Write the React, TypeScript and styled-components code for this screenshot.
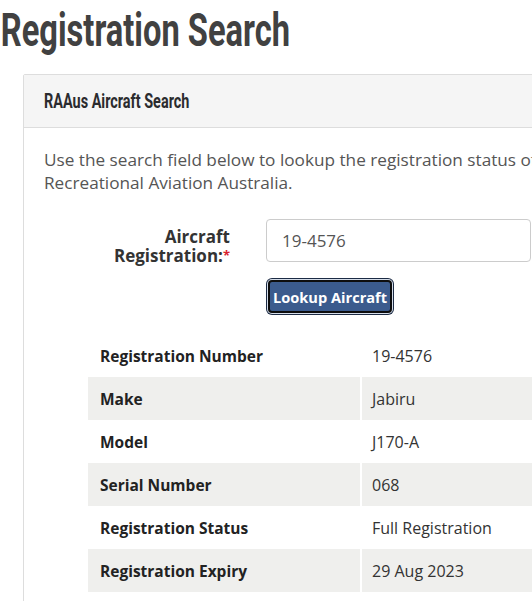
import React from 'react';
import styled, { createGlobalStyle } from 'styled-components';

const GlobalStyle = createGlobalStyle`
  html, body {
    margin: 0;
    padding: 0;
    background: #fff;
    overflow: hidden;
  }
  body {
    font-family: 'Open Sans', 'Lato', Arial, sans-serif;
    color: #555;
  }
`;

const Page = styled.div`
  width: 760px;
`;

// condensed display face: Roboto squeezed to the width of the original
const Heading = styled.h1`
  margin: 0;
  padding: 4px 0 0 1px;
  font-family: Roboto, 'Liberation Sans', sans-serif;
  font-weight: 700;
  font-size: 46px;
  line-height: 52px;
  color: #414141;
  transform: scaleX(0.71);
  transform-origin: left center;
  white-space: nowrap;
`;

const Panel = styled.section`
  margin: 18px 0 0 23px;
  border: 1px solid #dddddd;
  border-radius: 2px;
  background: #fff;
`;

const PanelHeader = styled.div`
  height: 52px;
  display: flex;
  align-items: center;
  padding: 0 20px;
  background: #f5f5f5;
  border-bottom: 1px solid #dddddd;
`;

const PanelTitle = styled.h2`
  margin: 0;
  font-family: Roboto, 'Liberation Sans', sans-serif;
  font-weight: 700;
  font-size: 19.5px;
  color: #2b2b2e;
  transform: scaleX(0.74);
  transform-origin: left center;
  white-space: nowrap;
`;

const PanelBody = styled.div`
  padding: 20px 20px 20px;
`;

const Intro = styled.p`
  margin: 0;
  font-size: 17.2px;
  line-height: 23px;
  color: #555;
  white-space: nowrap;
`;

const FormRow = styled.div`
  display: grid;
  grid-template-columns: 186px 265px;
  column-gap: 36px;
  margin-top: 25px;
  align-items: start;
`;

const Label = styled.label`
  padding-top: 8px;
  text-align: right;
  font-weight: 700;
  font-size: 17px;
  line-height: 19px;
  color: #333;
`;

const Required = styled.span`
  color: #d9232e;
  font-size: 13px;
  vertical-align: top;
`;

const Input = styled.input`
  box-sizing: border-box;
  width: 265px;
  height: 43px;
  padding: 0 15px;
  border: 1px solid #cccccc;
  border-radius: 4px;
  font-family: 'Open Sans', 'Lato', Arial, sans-serif;
  font-size: 17px;
  color: #555;
  outline: none;
`;

const ButtonRow = styled.div`
  display: grid;
  grid-template-columns: 186px auto;
  column-gap: 36px;
  margin-top: 15px;
  justify-items: start;
`;

const Button = styled.button`
  grid-column: 2;
  margin-left: 2px;
  height: 33px;
  padding: 0 3px;
  background: #3b5b8d;
  color: #fff;
  border: 2px solid #0d0d0d;
  border-radius: 4px;
  box-shadow: 0 0 0 1px #d6deea, 0 0 0 2px #1c2b44;
  font-family: 'Open Sans', 'Lato', Arial, sans-serif;
  font-weight: 700;
  font-size: 14.6px;
  cursor: pointer;
`;

const Table = styled.table`
  margin: 21px 0 0 44px;
  width: 640px;
  border-collapse: collapse;
`;

const Row = styled.tr<{ $shaded: boolean }>`
  height: 43px;
  background: ${(p) => (p.$shaded ? '#efefed' : '#fff')};
`;

const Key = styled.th`
  width: 248px;
  padding: 0 12px;
  text-align: left;
  font-weight: 700;
  font-size: 15.5px;
  color: #222;
  border-right: 2px solid #fff;
`;

const Value = styled.td`
  padding: 0 10px;
  font-size: 16px;
  color: #333;
`;

const DETAILS: [string, string][] = [
  ['Registration Number', '19-4576'],
  ['Make', 'Jabiru'],
  ['Model', 'J170-A'],
  ['Serial Number', '068'],
  ['Registration Status', 'Full Registration'],
  ['Registration Expiry', '29 Aug 2023'],
];

export default function App() {
  return (
    <Page>
      <GlobalStyle />
      <Heading>Registration Search</Heading>
      <Panel>
        <PanelHeader>
          <PanelTitle>RAAus Aircraft Search</PanelTitle>
        </PanelHeader>
        <PanelBody>
          <Intro>
            Use the search field below to lookup the registration status of an aircraft registered with
            <br />
            Recreational Aviation Australia.
          </Intro>
          <FormRow>
            <Label htmlFor="rego">
              Aircraft
              <br />
              Registration:<Required>*</Required>
            </Label>
            <Input id="rego" defaultValue="19-4576" />
          </FormRow>
          <ButtonRow>
            <Button>Lookup Aircraft</Button>
          </ButtonRow>
          <Table>
            <tbody>
              {DETAILS.map(([k, v], i) => (
                <Row key={k} $shaded={i % 2 === 1}>
                  <Key>{k}</Key>
                  <Value>{v}</Value>
                </Row>
              ))}
            </tbody>
          </Table>
        </PanelBody>
      </Panel>
    </Page>
  );
}
